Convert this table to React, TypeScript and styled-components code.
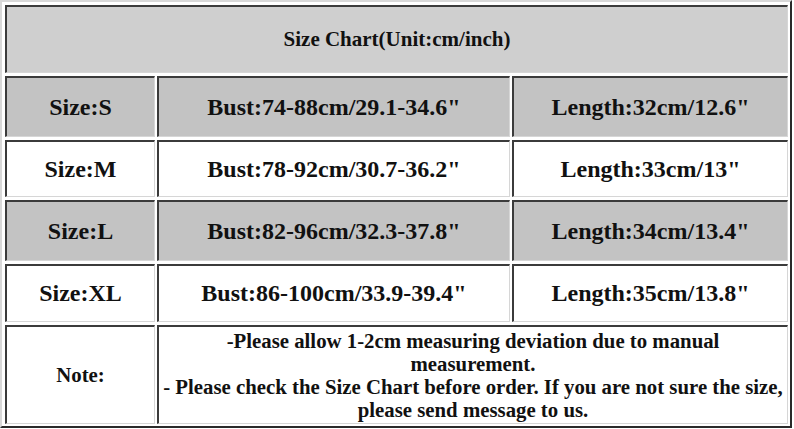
import React from "react";
import styled, { createGlobalStyle } from "styled-components";

const GlobalStyle = createGlobalStyle`
  html, body {
    margin: 0;
    padding: 0;
    background: #ffffff;
  }
  body {
    font-family: "Liberation Serif", "Times New Roman", serif;
  }
`;

const Chart = styled.div`
  width: 792px;
  box-sizing: border-box;
  border-style: solid;
  border-width: 2px;
  border-color: #d8d8d8 #2a2a2a #2a2a2a #d8d8d8;
  padding: 3px 2px 2px 3px;
  display: grid;
  grid-template-columns: 150px 353px 1fr;
  grid-template-rows: 68px 61px 57px 61px 58px 99px;
  column-gap: 2px;
  row-gap: 3px;
  background: #ffffff;
`;

const Cell = styled.div<{ $shade?: "title" | "row" | "none"; $span?: number; $size?: number }>`
  box-sizing: border-box;
  display: flex;
  align-items: center;
  justify-content: center;
  text-align: center;
  border-style: solid;
  border-width: 2px 1px 1px 2px;
  border-color: #3b3b3b #d6d6d6 #d6d6d6 #3b3b3b;
  background: ${(p) =>
    p.$shade === "title" ? "#cfcfcf" : p.$shade === "row" ? "#c3c3c3" : "#ffffff"};
  grid-column: span ${(p) => p.$span ?? 1};
  font-family: "Liberation Serif", "Times New Roman", serif;
  font-weight: bold;
  font-size: ${(p) => p.$size ?? 24}px;
  color: #111111;
  white-space: nowrap;
`;

const NoteText = styled.div`
  display: flex;
  flex-direction: column;
  align-items: center;
  font-size: 20.8px;
  line-height: 23px;
  white-space: nowrap;
`;

const rows = [
  { size: "Size:S", bust: 'Bust:74-88cm/29.1-34.6"', length: 'Length:32cm/12.6"', shade: "row" as const },
  { size: "Size:M", bust: 'Bust:78-92cm/30.7-36.2"', length: 'Length:33cm/13"', shade: "none" as const },
  { size: "Size:L", bust: 'Bust:82-96cm/32.3-37.8"', length: 'Length:34cm/13.4"', shade: "row" as const },
  { size: "Size:XL", bust: 'Bust:86-100cm/33.9-39.4"', length: 'Length:35cm/13.8"', shade: "none" as const },
];

export default function App() {
  return (
    <>
      <GlobalStyle />
      <Chart>
        <Cell $shade="title" $span={3} $size={21}>
          Size Chart(Unit:cm/inch)
        </Cell>
        {rows.map((r) => (
          <React.Fragment key={r.size}>
            <Cell $shade={r.shade}>{r.size}</Cell>
            <Cell $shade={r.shade}>{r.bust}</Cell>
            <Cell $shade={r.shade}>{r.length}</Cell>
          </React.Fragment>
        ))}
        <Cell $size={20.8}>Note:</Cell>
        <Cell $span={2} $size={20.8}>
          <NoteText>
            <span>-Please allow 1-2cm measuring deviation due to manual</span>
            <span>measurement.</span>
            <span>- Please check the Size Chart before order. If you are not sure the size,</span>
            <span>please send message to us.</span>
          </NoteText>
        </Cell>
      </Chart>
    </>
  );
}
